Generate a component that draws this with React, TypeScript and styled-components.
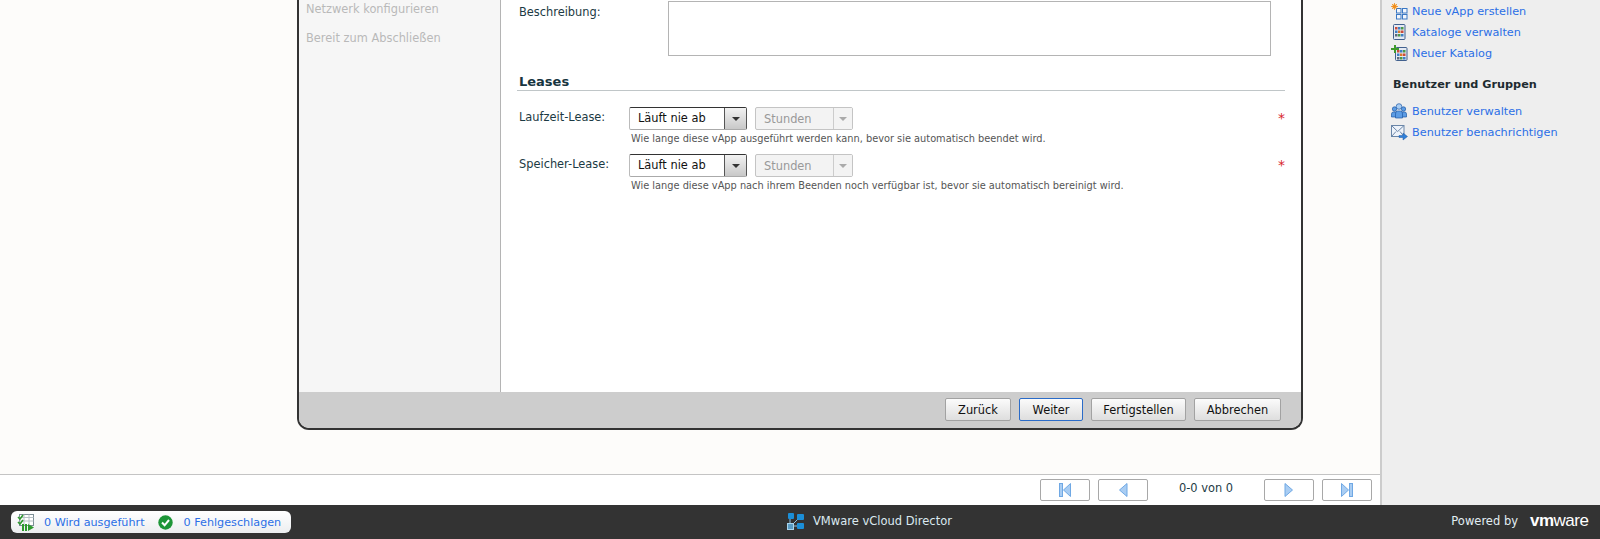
import React from "react";
import styled, { createGlobalStyle } from "styled-components";

const GlobalStyle = createGlobalStyle`
  html, body { margin: 0; padding: 0; height: 100%; overflow: hidden; }
  body { font-family: "DejaVu Sans", Verdana, sans-serif; font-size: 11.4px; color: #1c3a44; }
`;

const Page = styled.div`
  width: 1600px;
  height: 539px;
  display: flex;
  flex-direction: column;
  overflow: hidden;
`;

const MainRow = styled.div`
  flex: 1;
  min-height: 0;
  display: flex;
`;

const ContentColumn = styled.div`
  flex: 1;
  display: flex;
  flex-direction: column;
`;

const Workspace = styled.div`
  height: 474px;
  background: #fdfcfa;
  padding-left: 297px;
  box-sizing: border-box;
`;

/* the dialog runs off the top of the window, so it has no top edge here */
const Dialog = styled.div`
  width: 1006px;
  height: 430px;
  box-sizing: border-box;
  border: 2px solid #333;
  border-top: none;
  border-radius: 0 0 12px 12px;
  overflow: hidden;
  display: flex;
  flex-direction: column;
  background: #fff;
`;

const DialogBody = styled.div`
  flex: 1;
  display: flex;
  min-height: 0;
`;

const StepNav = styled.div`
  width: 202px;
  flex: none;
  box-sizing: border-box;
  background: #f6f6f6;
  border-right: 1px solid #b4b4b4;
  padding: 2px 0 0 7px;
  display: flex;
  flex-direction: column;
  gap: 15px;
`;

const Step = styled.div`
  line-height: 14px;
  color: #b9b9b9;
`;

const FormPane = styled.div`
  flex: 1;
  padding: 1px 16px 0 16px;
  position: relative;
`;

const DescriptionRow = styled.div`
  display: flex;
  height: 55px;
  padding-left: 2px;
`;

const FieldLabel = styled.div`
  line-height: 20px;
  color: #1c3a44;
`;

const DescriptionLabel = styled(FieldLabel)`
  width: 149px;
  line-height: 22px;
`;

const DescriptionBox = styled.div`
  width: 603px;
  height: 55px;
  box-sizing: border-box;
  background: #fff;
  border: 1px solid #b4b4b4;
`;

const SectionHeading = styled.h3`
  margin: 18px 0 0;
  padding: 0 0 2px 2px;
  height: 14px;
  line-height: 16px;
  font-size: 13px;
  font-weight: bold;
  color: #17353f;
  border-bottom: 1px solid #c0c6c8;
`;

const LeaseRow = styled.div<{ $top: number }>`
  display: grid;
  grid-template-columns: 110px 1fr 7px;
  padding-left: 2px;
  margin-top: ${(p) => p.$top}px;
`;

const Controls = styled.div`
  display: flex;
  gap: 8px;
`;

const SelectBox = styled.div<{ $disabled?: boolean }>`
  width: ${(p) => (p.$disabled ? "98px" : "118px")};
  height: 23px;
  box-sizing: border-box;
  display: flex;
  border: 1px solid ${(p) => (p.$disabled ? "#c4c4c4" : "#333")};
  border-right-color: ${(p) => (p.$disabled ? "#c4c4c4" : "#555")};
  border-left-color: ${(p) => (p.$disabled ? "#c4c4c4" : "#bbb")};
  border-bottom-color: ${(p) => (p.$disabled ? "#c4c4c4" : "#aaa")};
  border-radius: 2px;
  background: ${(p) => (p.$disabled ? "#f3f3f3" : "#fff")};
`;

const SelectValue = styled.div<{ $disabled?: boolean }>`
  flex: 1;
  padding-left: 8px;
  line-height: ${(p) => (p.$disabled ? "22px" : "21px")};
  color: ${(p) => (p.$disabled ? "#999" : "#111")};
`;

const SelectArrow = styled.div<{ $disabled?: boolean }>`
  width: ${(p) => (p.$disabled ? "18px" : "21px")};
  display: flex;
  align-items: center;
  justify-content: center;
  border-left: 1px solid ${(p) => (p.$disabled ? "#ccc" : "#555")};
  background: ${(p) =>
    p.$disabled ? "#f3f3f3" : "linear-gradient(#f2f2f2, #c8c8c8)"};

  &::after {
    content: "";
    border-left: 4px solid transparent;
    border-right: 4px solid transparent;
    border-top: 4px solid ${(p) => (p.$disabled ? "#aaa" : "#333")};
  }
`;

const Hint = styled.div`
  grid-column: 2;
  margin: 3px 0 0 2px;
  line-height: 11px;
  font-size: 9.8px;
  color: #555;
  white-space: nowrap;
`;

const Required = styled.div`
  color: #d8242c;
  font-size: 14px;
  line-height: 23px;
`;

const DialogFooter = styled.div`
  height: 36px;
  flex: none;
  background: #cdcdcd;
  display: flex;
  justify-content: flex-end;
  gap: 8px;
  padding: 6px 20px 0 0;
  box-sizing: border-box;
`;

const FooterButton = styled.div<{ $width: number; $active?: boolean }>`
  width: ${(p) => p.$width}px;
  height: 23px;
  box-sizing: border-box;
  text-align: center;
  line-height: 22px;
  color: #111;
  border: 1px solid ${(p) => (p.$active ? "#2a6bc8" : "#a2a2a2")};
  border-radius: 2px;
  background: linear-gradient(#fbfbfb, #dedede);
`;

const Pager = styled.div`
  flex: 1;
  background: #fff;
  border-top: 1px solid #c4c4c4;
  display: flex;
  justify-content: flex-end;
  gap: 8px;
  padding: 4px 8px 0 0;
`;

const PagerButton = styled.div`
  width: 50px;
  height: 22px;
  box-sizing: border-box;
  border: 1px solid #a8a8a8;
  border-radius: 2px;
  background: #fff;
  display: flex;
  align-items: center;
  justify-content: center;
`;

const PagerText = styled.div`
  width: 100px;
  text-align: center;
  line-height: 19px;
  color: #1c3a44;
`;

const SidePanel = styled.div`
  width: 220px;
  flex: none;
  box-sizing: border-box;
  background: #eeeeee;
  border-left: 2px solid #cccccc;
  padding: 1px 0 0 9px;
`;

const ActionList = styled.div`
  display: flex;
  flex-direction: column;
`;

const Action = styled.a`
  height: 21px;
  display: flex;
  align-items: center;
  gap: 4px;
  font-size: 11.25px;
  color: #2b6fe6;
`;

const ActionIcon = styled.svg`
  width: 17px;
  height: 17px;
  flex: none;
  overflow: visible;
`;

const PanelHeading = styled.div`
  margin: 13px 0 8px 2px;
  line-height: 16px;
  font-weight: bold;
  font-size: 11.25px;
  color: #1d2b30;
`;

const BottomBar = styled.div`
  height: 34px;
  flex: none;
  background: #333;
  display: grid;
  grid-template-columns: 776px auto 1fr;
  align-items: center;
  padding: 0 10px 0 11px;
  font-size: 11.5px;
`;

const StatusPill = styled.div`
  justify-self: start;
  width: 280px;
  height: 22px;
  box-sizing: border-box;
  display: flex;
  align-items: center;
  padding-left: 6px;
  border-radius: 6px;
  background: linear-gradient(#ffffff, #eceef0);
  color: #2b6fe6;
  font-size: 11.2px;

  svg {
    flex: none;
  }
`;

const StatusLabel = styled.span<{ $left: number }>`
  flex: none;
  white-space: nowrap;
  margin: 0 13px 0 ${(p) => p.$left}px;

  &:last-child {
    margin-right: 0;
  }
`;

const ProductTitle = styled.div`
  display: flex;
  align-items: center;
  gap: 9px;
  color: #dbe9f0;
  padding-bottom: 2px;
`;

const PoweredBy = styled.div`
  justify-self: end;
  display: flex;
  align-items: center;
  gap: 12px;
  color: #e2eef4;
  padding-bottom: 2px;
`;

const VmwareLogo = styled.div`
  width: 60px;
  font-family: "Liberation Sans", Arial, sans-serif;
  font-size: 17px;
  line-height: 18px;
  letter-spacing: -0.5px;
  color: #fff;
  white-space: nowrap;

  b {
    font-weight: bold;
  }
`;

const NewVappIcon = () => (
  <ActionIcon viewBox="0 0 17 17">
    <g fill="#f2f6fc" stroke="#3a78c4">
      <rect x="5.5" y="5.5" width="4.5" height="4.5" />
      <rect x="11.5" y="5.5" width="4.5" height="4.5" />
      <rect x="5.5" y="11.5" width="4.5" height="4.5" />
      <rect x="11.5" y="11.5" width="4.5" height="4.5" />
    </g>
    <circle cx="3.5" cy="3.5" r="2.2" fill="#f6b02e" />
    <path d="M3.5 0v7M0 3.5h7M1 1l5 5M6 1L1 6" stroke="#f0861a" strokeWidth="0.8" />
  </ActionIcon>
);

const CatalogIcon = ({ plus }: { plus?: boolean }) => (
  <ActionIcon viewBox="0 0 17 17">
    <rect
      x={plus ? 4.5 : 2.5}
      y={plus ? 2.5 : 0.5}
      width="11.5"
      height={plus ? 13 : 15}
      rx="1"
      fill="#e4e9f2"
      stroke="#41608e"
    />
    <g transform={plus ? "translate(6 5)" : "translate(4 3)"}>
      <rect width="2.5" height="2.5" fill="#c94a3a" />
      <rect x="3" width="2.5" height="2.5" fill="#3f7fc4" />
      <rect x="6" width="2.5" height="2.5" fill="#4c9a48" />
      <rect y="3.5" width="2.5" height="2.5" fill="#3f7fc4" />
      <rect x="3" y="3.5" width="2.5" height="2.5" fill="#d9772b" />
      <rect x="6" y="3.5" width="2.5" height="2.5" fill="#c94a3a" />
      <rect y="7" width="2.5" height="2.5" fill="#5c6b7a" />
      <rect x="3" y="7" width="2.5" height="2.5" fill="#4c9a48" />
      <rect x="6" y="7" width="2.5" height="2.5" fill="#3f7fc4" />
    </g>
    {plus && <path d="M3 0h2v3h3v2H5v3H3V5H0V3h3z" fill="#3f9a2c" />}
  </ActionIcon>
);

const UsersIcon = () => (
  <ActionIcon viewBox="0 0 17 17">
    <g fill="#5c9ce4" stroke="#1f5aa6" strokeWidth="0.7">
      <circle cx="3.5" cy="6" r="2.2" />
      <circle cx="12.5" cy="6" r="2.2" />
      <path d="M0.5 14v-3q0-2 2-2h3v5z" />
      <path d="M15.5 14v-3q0-2-2-2h-3v5z" />
      <path d="M4.5 15v-4q0-3 2-3h3q2 0 2 3v4z" />
      <circle cx="8" cy="3.5" r="2.8" fill="#a9cdf3" />
    </g>
  </ActionIcon>
);

const NotifyIcon = () => (
  <ActionIcon viewBox="0 0 17 17">
    <rect x="0.5" y="1.5" width="12.5" height="11" fill="#eef3fa" stroke="#6a86a8" />
    <path d="M0.5 1.5l6.2 6 6.3-6M0.5 12.5l4.5-5M13 12.5l-4-5" fill="none" stroke="#6a86a8" />
    <path d="M8 11.5h4V9l4.5 3.5-4.5 3.5v-2.5H8z" fill="#2f7fd8" stroke="#1f5aa6" strokeWidth="0.5" />
  </ActionIcon>
);

const TaskIcon = () => (
  <svg width="18" height="19" viewBox="0 0 18 19">
    <rect x="2.5" y="1.5" width="14" height="11" fill="#fff" stroke="#7d8f96" />
    <path d="M2.5 4.5h14M2.5 8h14M7 1.5v11M12 1.5v11" stroke="#b8c2c6" />
    <path d="M1 4l2 2 3-4M1 9l2 2 3-4" fill="none" stroke="#2e9a2e" strokeWidth="1.6" />
    <path d="M5 11h2v7H5zM8 11h2v7H8zM11 11l6 3.5-6 3.5z" fill="#2e9a2e" />
  </svg>
);

const CheckIcon = () => (
  <svg width="15" height="15" viewBox="0 0 15 15">
    <circle cx="7.5" cy="7.5" r="7.2" fill="#1e9638" />
    <path d="M4 7.5l2.6 2.8L11 5" fill="none" stroke="#fff" strokeWidth="2" />
  </svg>
);

const CloudIcon = () => (
  <svg width="17" height="17" viewBox="0 0 17 17">
    <path d="M3 4v9h7M5 12l6-6" stroke="#8fc4e4" strokeWidth="1" fill="none" />
    <rect x="1" y="0" width="6" height="6" rx="1" fill="#1b8fd8" />
    <rect x="10" y="1" width="7" height="6" rx="1" fill="#1b8fd8" />
    <rect x="10" y="10" width="7" height="6" rx="1" fill="#1b8fd8" />
    <rect x="0.5" y="10.5" width="6" height="6" fill="#5a9cc4" stroke="#a8d4ec" />
  </svg>
);

const PagerGlyph = ({ dir, stop }: { dir: "left" | "right"; stop?: boolean }) => (
  <svg width="14" height="14" viewBox="0 0 14 14">
    <g
      fill="#a9cdf3"
      stroke="#6fa8e4"
      transform={dir === "right" ? "matrix(-1 0 0 1 14 0)" : undefined}
    >
      {stop && <rect x="1.5" y="0.5" width="3" height="13" />}
      <path d={stop ? "M12.5 0.5v13L5.5 7z" : "M11 0.5v13L3.5 7z"} />
    </g>
  </svg>
);

const steps = ["Netzwerk konfigurieren", "Bereit zum Abschließen"];

const leases = [
  {
    label: "Laufzeit-Lease:",
    hint: "Wie lange diese vApp ausgeführt werden kann, bevor sie automatisch beendet wird.",
    top: 16,
  },
  {
    label: "Speicher-Lease:",
    hint: "Wie lange diese vApp nach ihrem Beenden noch verfügbar ist, bevor sie automatisch bereinigt wird.",
    top: 10,
  },
];

const buttons = [
  { label: "Zurück", width: 66 },
  { label: "Weiter", width: 64, active: true },
  { label: "Fertigstellen", width: 95 },
  { label: "Abbrechen", width: 87 },
];

export default function App() {
  return (
    <Page>
      <GlobalStyle />
      <MainRow>
        <ContentColumn>
          <Workspace>
            <Dialog>
              <DialogBody>
                <StepNav>
                  {steps.map((step) => (
                    <Step key={step}>{step}</Step>
                  ))}
                </StepNav>
                <FormPane>
                  <DescriptionRow>
                    <DescriptionLabel>Beschreibung:</DescriptionLabel>
                    <DescriptionBox />
                  </DescriptionRow>
                  <SectionHeading>Leases</SectionHeading>
                  {leases.map((lease) => (
                    <LeaseRow key={lease.label} $top={lease.top}>
                      <FieldLabel>{lease.label}</FieldLabel>
                      <Controls>
                        <SelectBox>
                          <SelectValue>Läuft nie ab</SelectValue>
                          <SelectArrow />
                        </SelectBox>
                        <SelectBox $disabled>
                          <SelectValue $disabled>Stunden</SelectValue>
                          <SelectArrow $disabled />
                        </SelectBox>
                      </Controls>
                      <Required>*</Required>
                      <Hint>{lease.hint}</Hint>
                    </LeaseRow>
                  ))}
                </FormPane>
              </DialogBody>
              <DialogFooter>
                {buttons.map((button) => (
                  <FooterButton
                    key={button.label}
                    $width={button.width}
                    $active={button.active}
                  >
                    {button.label}
                  </FooterButton>
                ))}
              </DialogFooter>
            </Dialog>
          </Workspace>
          <Pager>
            <PagerButton>
              <PagerGlyph dir="left" stop />
            </PagerButton>
            <PagerButton>
              <PagerGlyph dir="left" />
            </PagerButton>
            <PagerText>0-0 von 0</PagerText>
            <PagerButton>
              <PagerGlyph dir="right" />
            </PagerButton>
            <PagerButton>
              <PagerGlyph dir="right" stop />
            </PagerButton>
          </Pager>
        </ContentColumn>
        <SidePanel>
          <ActionList>
            <Action>
              <NewVappIcon />
              Neue vApp erstellen
            </Action>
            <Action>
              <CatalogIcon />
              Kataloge verwalten
            </Action>
            <Action>
              <CatalogIcon plus />
              Neuer Katalog
            </Action>
          </ActionList>
          <PanelHeading>Benutzer und Gruppen</PanelHeading>
          <ActionList>
            <Action>
              <UsersIcon />
              Benutzer verwalten
            </Action>
            <Action>
              <NotifyIcon />
              Benutzer benachrichtigen
            </Action>
          </ActionList>
        </SidePanel>
      </MainRow>
      <BottomBar>
        <StatusPill>
          <TaskIcon />
          <StatusLabel $left={9}>0 Wird ausgeführt</StatusLabel>
          <CheckIcon />
          <StatusLabel $left={11}>0 Fehlgeschlagen</StatusLabel>
        </StatusPill>
        <ProductTitle>
          <CloudIcon />
          VMware vCloud Director
        </ProductTitle>
        <PoweredBy>
          Powered by
          <VmwareLogo>
            <b>vm</b>ware
          </VmwareLogo>
        </PoweredBy>
      </BottomBar>
    </Page>
  );
}
